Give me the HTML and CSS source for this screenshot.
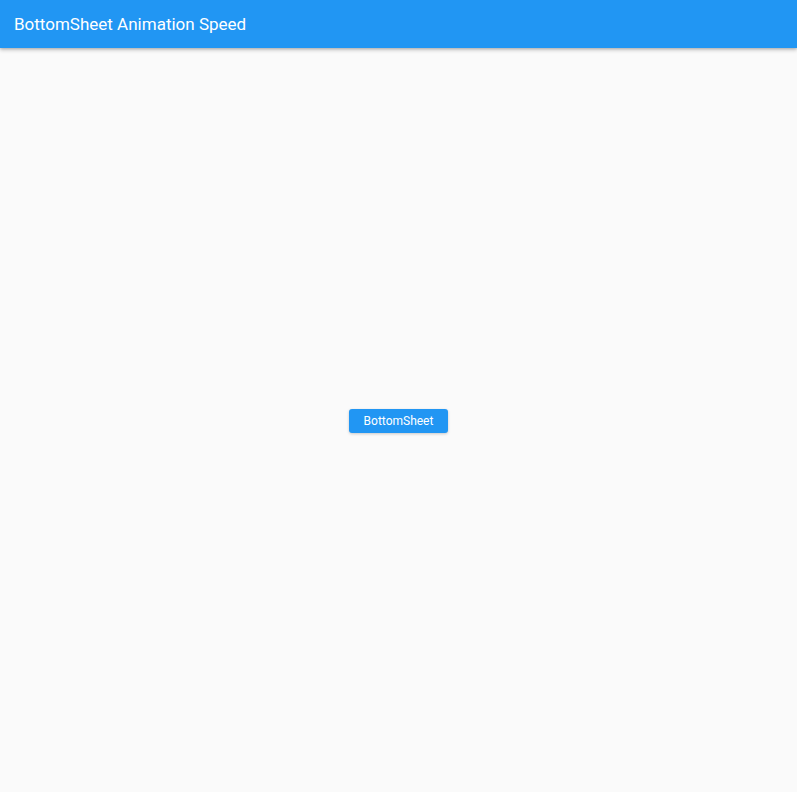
FILE: index.html
```html
<!DOCTYPE html>
<html>
<head>
<meta charset="utf-8">
<link rel="stylesheet" href="styles.css">
</head>
<body>
<header class="appbar"><h1 class="title">BottomSheet Animation Speed</h1></header>
<main class="content">
<button class="btn">BottomSheet</button>
</main>
</body>
</html>
```
FILE: styles.css
```css
html, body { margin: 0; padding: 0; height: 100%; }
body {
  background: #fafafa;
  font-family: Roboto, "Noto Sans", sans-serif;
  display: flex;
  flex-direction: column;
}
.appbar {
  height: 48px;
  background: #2196f3;
  display: flex;
  align-items: center;
  padding-left: 14px;
  box-shadow: 0 2px 4px rgba(0,0,0,0.22), 0 1px 2px rgba(0,0,0,0.12);
  position: relative;
  z-index: 1;
  flex: none;
}
.title {
  margin: 0;
  color: #fff;
  font-size: 17px;
  font-weight: 400;
}
.content {
  flex: 1;
  display: flex;
  align-items: center;
  justify-content: center;
}
.btn {
  background: #2196f3;
  color: #fff;
  border: none;
  border-radius: 3px;
  font-family: Roboto, sans-serif;
  font-size: 12px;
  height: 24px;
  width: 99px;
  padding: 0;
  margin-top: 2px;
  box-shadow: 0 1px 3px rgba(0,0,0,0.2);
}
```
